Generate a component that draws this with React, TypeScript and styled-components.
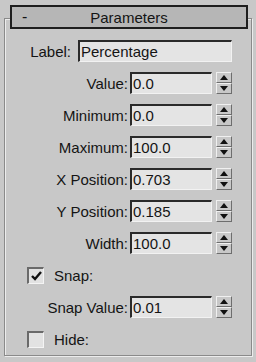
import React from "react";
import styled, { createGlobalStyle } from "styled-components";

const Global = createGlobalStyle`
	html, body {
		margin: 0;
		padding: 0;
		background: #c8c8c8;
	}
	body {
		font-family: "Liberation Sans", Arial, sans-serif;
		font-size: 15px;
		color: #141414;
	}
`;

const Panel = styled.div`
	width: 256px;
	height: 362px;
	box-sizing: border-box;
	padding: 5px 4px 0 4px;
	background: #c8c8c8;
`;

const Header = styled.div`
	position: relative;
	z-index: 1;
	margin: 0 4px 0 6px;
	height: 24px;
	box-sizing: border-box;
	border: 2px solid #1e1e1e;
	background: #b6b6b6;
	display: flex;
	align-items: center;
	padding: 0 10px;
`;

const Toggle = styled.span`
	width: 20px;
	font-size: 16px;
`;

const Title = styled.span`
	flex: 1;
	text-align: center;
	margin-right: 20px;
`;

const Group = styled.div`
	margin-top: -11px;
	height: 338px;
	box-sizing: border-box;
	border: 1px solid #8a8a8a;
	box-shadow: 1px 1px 0 #ececec, inset 1px 1px 0 #ececec;
	padding-top: 21px;
	display: flex;
	flex-direction: column;
	gap: 10px;
`;

const Row = styled.div`
	display: flex;
	align-items: center;
	height: 22px;
`;

const Label = styled.span<{ $w: number; $gap: number }>`
	width: ${(p) => p.$w}px;
	margin-right: ${(p) => p.$gap}px;
	text-align: right;
	white-space: nowrap;
`;

const Field = styled.div<{ $w: number }>`
	width: ${(p) => p.$w}px;
	height: 22px;
	box-sizing: border-box;
	background: #e4e4e4;
	border-style: solid;
	border-width: 2px 1px 1px 2px;
	border-color: #2a2a2a #f2f2f2 #f2f2f2 #2a2a2a;
	display: flex;
	align-items: center;
	padding-left: 1px;
	line-height: 1;
`;

const Spinner = styled.div`
	margin-left: 4px;
	width: 16px;
	height: 22px;
	display: flex;
	flex-direction: column;
`;

const SpinHalf = styled.div`
	flex: 1;
	box-sizing: border-box;
	background: #c8c8c8;
	border-style: solid;
	border-width: 1px;
	border-color: #f0f0f0 #6e6e6e #6e6e6e #f0f0f0;
	display: flex;
	align-items: center;
	justify-content: center;
`;

const Check = styled.div`
	margin-left: 22px;
	width: 17px;
	height: 17px;
	box-sizing: border-box;
	background: #e2e2e2;
	border-style: solid;
	border-width: 2px 1px 1px 2px;
	border-color: #6a6a6a #f4f4f4 #f4f4f4 #6a6a6a;
	display: flex;
	align-items: center;
	justify-content: center;
`;

const CheckText = styled.span`
	margin-left: 10px;
`;

const Arrow = ({ up }: { up?: boolean }) => (
	<svg width="8" height="5" viewBox="0 0 8 5">
		<polygon points={up ? "4,0 8,5 0,5" : "0,0 8,0 4,5"} fill="#111" />
	</svg>
);

const Spin = () => (
	<Spinner>
		<SpinHalf>
			<Arrow up />
		</SpinHalf>
		<SpinHalf>
			<Arrow />
		</SpinHalf>
	</Spinner>
);

const NumRow = ({ label, value }: { label: string; value: string }) => (
	<Row>
		<Label $w={123} $gap={2}>
			{label}
		</Label>
		<Field $w={82}>{value}</Field>
		<Spin />
	</Row>
);

const CheckRow = ({ label, checked }: { label: string; checked?: boolean }) => (
	<Row>
		<Check>
			{checked && (
				<svg width="11" height="10" viewBox="0 0 11 10">
					<path d="M1 5 L4 8 L10 1" stroke="#111" strokeWidth="2.4" fill="none" />
				</svg>
			)}
		</Check>
		<CheckText>{label}</CheckText>
	</Row>
);

export default function App() {
	return (
		<Panel>
			<Global />
			<Header>
				<Toggle>-</Toggle>
				<Title>Parameters</Title>
			</Header>
			<Group>
				<Row>
					<Label $w={66} $gap={7}>
						Label:
					</Label>
					<Field $w={154}>Percentage</Field>
				</Row>
				<NumRow label="Value:" value="0.0" />
				<NumRow label="Minimum:" value="0.0" />
				<NumRow label="Maximum:" value="100.0" />
				<NumRow label="X Position:" value="0.703" />
				<NumRow label="Y Position:" value="0.185" />
				<NumRow label="Width:" value="100.0" />
				<CheckRow label="Snap:" checked />
				<NumRow label="Snap Value:" value="0.01" />
				<CheckRow label="Hide:" />
			</Group>
		</Panel>
	);
}
